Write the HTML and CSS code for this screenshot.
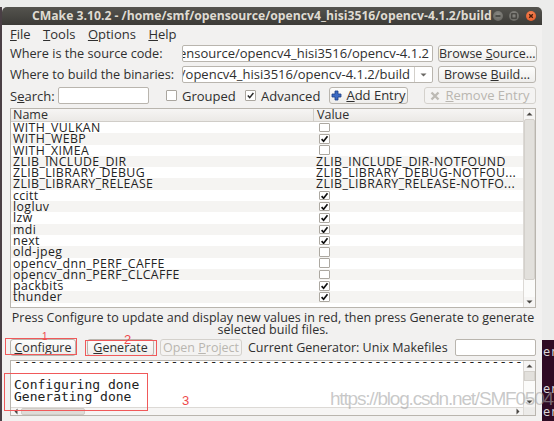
FILE: index.html
```html
<!DOCTYPE html>
<html>
<head>
<meta charset="utf-8">
<link rel="stylesheet" href="styles.css">
</head>
<body>
<div class="desk">
  <div class="edge"></div>
  <div class="win">
    <div class="titlebar">
      <span class="title">CMake 3.10.2 - /home/smf/opensource/opencv4_hisi3516/opencv-4.1.2/build</span>
      <div class="wctl">
        <span class="wb wb-grey"><svg width="10" height="10" viewBox="0 0 10 10"><rect x="2.5" y="4.3" width="5" height="1.4" fill="#3a3935"/></svg></span>
        <span class="wb wb-grey"><svg width="10" height="10" viewBox="0 0 10 10"><rect x="2.8" y="2.8" width="4.4" height="4.4" fill="none" stroke="#3a3935" stroke-width="1.1"/></svg></span>
        <span class="wb wb-close"><svg width="10" height="10" viewBox="0 0 10 10"><path d="M3.2 3.2L6.8 6.8M6.8 3.2L3.2 6.8" stroke="#4a1a08" stroke-width="1.4"/></svg></span>
      </div>
    </div>
    <div class="menubar">
      <span class="mi"><u>F</u>ile</span>
      <span class="mi"><u>T</u>ools</span>
      <span class="mi"><u>O</u>ptions</span>
      <span class="mi"><u>H</u>elp</span>
    </div>
    <div class="content">
      <div class="pathrow">
        <span class="lbl">Where is the source code:</span>
        <div class="field"><span class="ftext">/home/smf/opensource/opencv4_hisi3516/opencv-4.1.2</span></div>
        <span class="btn"><span>Browse <u>S</u>ource...</span></span>
      </div>
      <div class="pathrow gap4">
        <span class="lbl">Where to build the binaries:</span>
        <div class="field combo">
          <div class="ctext"><span class="ftext">/home/smf/opensource/opencv4_hisi3516/opencv-4.1.2/build</span></div>
          <span class="carrow"><svg width="7" height="4" viewBox="0 0 7 4"><path d="M0.5 0.5h6L3.5 3.5z" fill="#6a6864"/></svg></span>
        </div>
        <span class="btn"><span>Browse <u>B</u>uild...</span></span>
      </div>
      <div class="searchrow gap4">
        <span class="slbl">S<u>e</u>arch:</span>
        <div class="sinput"></div>
        <label class="chk grouped"><span class="box"></span><span>Grouped</span></label>
        <label class="chk adv"><span class="box"><svg width="9" height="9" viewBox="0 0 9 9"><path d="M1.8 4.6L3.7 6.6L7.4 2" fill="none" stroke="#2b2b2b" stroke-width="1.5"/></svg></span><span>Advanced</span></label>
        <span class="btn addbtn"><svg class="plus" width="11" height="11" viewBox="0 0 11 11"><path d="M4 1h3v3h3v3H7v3H4V7H1V4h3z" fill="#3d6bc4" stroke="#1d3f86" stroke-width="0.8"/></svg><span><u>A</u>dd Entry</span></span>
        <span class="btn dis rembtn"><svg class="xic" width="10" height="10" viewBox="0 0 10 10"><path d="M1.5 1.5L8.5 8.5M8.5 1.5L1.5 8.5" stroke="#bdbab4" stroke-width="2.4"/></svg><span><u>R</u>emove Entry</span></span>
      </div>
      <div class="table gap4">
        <div class="tmain">
          <div class="thead"><span class="cname">Name</span><span class="cval">Value</span></div>
          <div class="tbody">
            <div class="tr"><span class="cname">WITH_VULKAN</span><span class="cval"><span class="cb"></span></span></div>
            <div class="tr"><span class="cname">WITH_WEBP</span><span class="cval"><span class="cb on"></span></span></div>
            <div class="tr"><span class="cname">WITH_XIMEA</span><span class="cval"><span class="cb"></span></span></div>
            <div class="tr"><span class="cname">ZLIB_INCLUDE_DIR</span><span class="cval">ZLIB_INCLUDE_DIR-NOTFOUND</span></div>
            <div class="tr"><span class="cname">ZLIB_LIBRARY_DEBUG</span><span class="cval">ZLIB_LIBRARY_DEBUG-NOTFOU...</span></div>
            <div class="tr"><span class="cname">ZLIB_LIBRARY_RELEASE</span><span class="cval">ZLIB_LIBRARY_RELEASE-NOTFO...</span></div>
            <div class="tr"><span class="cname">ccitt</span><span class="cval"><span class="cb on"></span></span></div>
            <div class="tr"><span class="cname">logluv</span><span class="cval"><span class="cb on"></span></span></div>
            <div class="tr"><span class="cname">lzw</span><span class="cval"><span class="cb on"></span></span></div>
            <div class="tr"><span class="cname">mdi</span><span class="cval"><span class="cb on"></span></span></div>
            <div class="tr"><span class="cname">next</span><span class="cval"><span class="cb on"></span></span></div>
            <div class="tr"><span class="cname">old-jpeg</span><span class="cval"><span class="cb"></span></span></div>
            <div class="tr"><span class="cname">opencv_dnn_PERF_CAFFE</span><span class="cval"><span class="cb"></span></span></div>
            <div class="tr"><span class="cname">opencv_dnn_PERF_CLCAFFE</span><span class="cval"><span class="cb"></span></span></div>
            <div class="tr"><span class="cname">packbits</span><span class="cval"><span class="cb on"></span></span></div>
            <div class="tr"><span class="cname">thunder</span><span class="cval"><span class="cb on"></span></span></div>
          </div>
        </div>
        <div class="vscroll">
          <span class="arr"><svg width="7" height="4" viewBox="0 0 7 4"><path d="M0.5 3.5h6L3.5 0.5z" fill="#4a4844"/></svg></span>
          <span class="thumb"></span>
          <span class="track"></span>
          <span class="arr"><svg width="7" height="4" viewBox="0 0 7 4"><path d="M0.5 0.5h6L3.5 3.5z" fill="#4a4844"/></svg></span>
        </div>
      </div>
      <p class="desc"><span class="l1">Press Configure to update and display new values in red, then press Generate to generate</span><span class="l2">selected build files.</span></p>
      <div class="btnrow">
        <span class="btn b-conf"><span><u>C</u>onfigure</span></span>
        <span class="btn b-gen"><span><u>G</u>enerate</span></span>
        <span class="btn dis b-open"><span>Open <u>P</u>roject</span></span>
        <span class="curgen">Current Generator: Unix Makefiles</span>
        <div class="ginput"></div>
      </div>
      <div class="output">
        <div class="omain">
          <div class="otext">
            <div class="oline">-----------------------------------------------------------------------</div>
            <div class="oline">&nbsp;</div>
            <div class="oline">Configuring done</div>
            <div class="oline">Generating done</div>
          </div>
          <div class="hscroll">
            <span class="harr"><svg width="4" height="7" viewBox="0 0 4 7"><path d="M3.5 0.5v6L0.5 3.5z" fill="#4a4844"/></svg></span>
            <span class="hthumb"></span>
            <span class="htrack"></span>
            <span class="harr"><svg width="4" height="7" viewBox="0 0 4 7"><path d="M0.5 0.5v6L3.5 3.5z" fill="#4a4844"/></svg></span>
          </div>
        </div>
        <div class="ovscroll">
          <span class="arr"><svg width="7" height="4" viewBox="0 0 7 4"><path d="M0.5 3.5h6L3.5 0.5z" fill="#4a4844"/></svg></span>
          <span class="othumb"></span>
          <span class="otrack"></span>
          <span class="arr"><svg width="7" height="4" viewBox="0 0 7 4"><path d="M0.5 0.5h6L3.5 3.5z" fill="#4a4844"/></svg></span>
          <span class="corner"></span>
        </div>
      </div>
    </div>
  </div>
</div>

<div class="term">
  <span class="tl t1">er</span>
  <span class="tl t2">er</span>
  <span class="tl t3">er</span>
</div>

<div class="mark m1"></div>
<div class="mark m2"></div>
<div class="mark m3"></div>
<span class="num n1">1</span>
<span class="num n2">2</span>
<span class="num n3">3</span>
<span class="wm">https://blog.csdn.net/SMF0504</span>
</body>
</html>
```

FILE: styles.css
```css
* { box-sizing: border-box; }

body {
  margin: 0;
  width: 554px;
  height: 421px;
  overflow: hidden;
  position: relative;
  background: #ececeb;
  font-family: "Open Sans", "DejaVu Sans", sans-serif;
  color: #2f2f2f;
}

u { text-decoration: underline; text-underline-offset: 1px; }

.desk {
  display: flex;
  padding-top: 7px;
  height: 421px;
}

.edge {
  width: 2px;
  background: #4a3f45;
}

.win {
  width: 540px;
  height: 414px;
  background: #f2f1f0;
  border-radius: 5px 5px 0 0;
  display: flex;
  flex-direction: column;
  overflow: hidden;
}

.titlebar {
  flex: none;
  height: 18px;
  display: flex;
  align-items: center;
  padding: 0 6px 0 30px;
  background: linear-gradient(#54534e, #3c3b37);
}

.title {
  flex: 1;
  white-space: nowrap;
  overflow: hidden;
  color: #dfdbd2;
  font-weight: 700;
  font-size: 12.2px;
  line-height: 18px;
}

.wctl { display: flex; gap: 6px; }

.wb {
  width: 10px;
  height: 10px;
  border-radius: 50%;
  display: flex;
}
.wb-grey { background: radial-gradient(circle at 50% 35%, #8a8984, #5f5e59); }
.wb-close { background: radial-gradient(circle at 50% 35%, #f58a5c, #e2501c); margin-left: 1px; }

.menubar {
  flex: none;
  height: 17px;
  display: flex;
  align-items: center;
  padding-left: 8px;
  font-size: 13px;
}
.mi { margin-right: 12.5px; }

.content {
  flex: 1;
  display: flex;
  flex-direction: column;
  padding: 3px 6px 0 8px;
  font-size: 12.5px;
}

.gap4 { margin-top: 4px; }

.pathrow {
  height: 17px;
  display: grid;
  grid-template-columns: 167px 251px 1fr;
  column-gap: 5px;
  align-items: center;
}

.lbl { white-space: nowrap; line-height: 17px; font-size: 12.7px; }

.field {
  height: 17px;
  background: #fff;
  border: 1px solid #b9b5ae;
  border-radius: 2px;
  display: flex;
  justify-content: flex-end;
  overflow: hidden;
  padding-right: 3px;
  line-height: 15px;
  font-size: 13px;
}
.ftext { white-space: nowrap; flex: none; }

.combo { padding-right: 0; justify-content: stretch; }
.ctext {
  flex: 1;
  display: flex;
  justify-content: flex-end;
  overflow: hidden;
  padding-right: 4px;
}
.carrow {
  flex: none;
  width: 18px;
  border-left: 1px solid #d3d0cb;
  display: flex;
  align-items: center;
  justify-content: center;
}

.btn {
  height: 17px;
  display: flex;
  align-items: center;
  justify-content: center;
  white-space: nowrap;
  background: linear-gradient(#fdfdfc, #eeedeb);
  border: 1px solid #b9b5ae;
  border-radius: 3px;
  line-height: 15px;
}
.btn.dis {
  color: #b9b6b0;
  border-color: #d4d1cc;
  background: #f4f3f2;
}

.searchrow {
  height: 17px;
  display: flex;
  align-items: center;
  font-size: 13px;
}
.slbl { width: 48px; white-space: nowrap; }
.sinput {
  width: 91px;
  height: 17px;
  background: #fff;
  border: 1px solid #b9b5ae;
  border-radius: 2px;
}
.chk {
  display: flex;
  align-items: center;
  white-space: nowrap;
}
.grouped { width: 79px; margin-left: 17px; }
.adv { width: 84px; }
.box {
  width: 11px;
  height: 11px;
  margin-right: 5px;
  background: #fff;
  border: 1px solid #aaa69f;
  border-radius: 1px;
  display: flex;
  align-items: center;
  justify-content: center;
}
.addbtn { width: 79px; gap: 4px; }
.rembtn { width: 112px; margin-left: 16px; gap: 5px; }

.table {
  height: 200px;
  flex: none;
  display: flex;
  border: 1px solid #b9b5ae;
  background: #fff;
}
.tmain { flex: 1; display: flex; flex-direction: column; }
.thead {
  height: 13px;
  display: flex;
  background: linear-gradient(#f6f5f4, #ebe9e6);
  border-bottom: 1px solid #d0cdc8;
  font-size: 12.5px;
  line-height: 12px;
  font-weight: 500;
}
.thead .cval { border-left: 1px solid #d0cdc8; }
.tbody { flex: 1; }
.cname {
  width: 302px;
  padding-left: 2px;
  white-space: nowrap;
}
.cval {
  flex: 1;
  padding-left: 3px;
  white-space: nowrap;
  display: flex;
  align-items: center;
}
.tr {
  height: 11.3px;
  display: flex;
  font-size: 12.3px;
  line-height: 11.3px;
  font-weight: 500;
  letter-spacing: 0.4px;
  color: #222;
}
.tr:nth-child(even) { background: #f5f4f2; }

.cb {
  width: 11px;
  height: 9.5px;
  margin-left: 3px;
  background: #fff;
  border: 1px solid #aca8a1;
  border-radius: 1px;
}
.cb.on {
  background: #fff url("data:image/svg+xml,%3Csvg xmlns='http://www.w3.org/2000/svg' width='9' height='8' viewBox='0 0 9 8'%3E%3Cpath d='M1.6 4.2L3.6 6.3L7.5 1.4' fill='none' stroke='%23111' stroke-width='1.7'/%3E%3C/svg%3E") center/9px 8px no-repeat;
}

.vscroll {
  width: 12px;
  display: flex;
  flex-direction: column;
  border-left: 1px solid #dcd9d5;
  background: #f6f5f4;
}
.arr {
  height: 10px;
  flex: none;
  display: flex;
  align-items: center;
  justify-content: center;
}
.thumb { height: 161px; flex: none; background: #e2e0dc; border: 1px solid #d3d0cb; border-radius: 2px; }
.track { flex: 1; background: #fbfbfa; }

.desc {
  margin: 4px 0 0;
  height: 23px;
  display: flex;
  flex-direction: column;
  align-items: center;
  font-size: 12.5px;
  line-height: 11.5px;
}
.l1, .l2 { white-space: nowrap; }

.btnrow {
  margin-top: 4px;
  height: 17px;
  display: flex;
  align-items: center;
}
.b-conf { width: 66px; }
.b-gen { width: 67px; margin-left: 11px; }
.b-open { width: 82px; margin-left: 6px; }
.curgen { margin-left: 6px; white-space: nowrap; width: 202px; }
.ginput {
  margin-left: auto;
  width: 81px;
  height: 17px;
  background: #fff;
  border: 1px solid #b9b5ae;
  border-radius: 2px;
}

.output {
  margin-top: 4px;
  height: 56px;
  flex: none;
  display: flex;
  border: 1px solid #b9b5ae;
  background: #fff;
}
.omain { flex: 1; display: flex; flex-direction: column; overflow: hidden; }
.otext {
  flex: 1;
  overflow: hidden;
  padding-left: 3px;
  font-family: "DejaVu Sans Mono", monospace;
  font-size: 13px;
  color: #222;
}
.oline {
  height: 11.5px;
  line-height: 11.5px;
  white-space: nowrap;
}
.oline:first-child { margin-top: -5px; }

.hscroll {
  height: 8px;
  flex: none;
  display: flex;
  background: #f6f5f4;
  border-top: 1px solid #dcd9d5;
}
.harr { width: 10px; flex: none; display: flex; align-items: center; justify-content: center; }
.hthumb { width: 64px; background: #dedcd8; border: 1px solid #cfccc7; border-radius: 2px; }
.htrack { flex: 1; }

.ovscroll {
  width: 12px;
  display: flex;
  flex-direction: column;
  border-left: 1px solid #dcd9d5;
  background: #f6f5f4;
}
.othumb { height: 10px; flex: none; background: #e2e0dc; border: 1px solid #d3d0cb; }
.otrack { flex: 1; background: #fbfbfa; }
.corner { height: 8px; flex: none; background: #ecebe9; }

.term {
  position: absolute;
  left: 542px;
  top: 340px;
  width: 12px;
  height: 81px;
  background: #2f0b24;
  overflow: hidden;
  font-family: "DejaVu Sans Mono", monospace;
  font-size: 12px;
  color: #d8d4d6;
}
.tl { position: absolute; left: 1px; line-height: 12px; }
.t1 { top: 6px; }
.t2 { top: 43px; }
.t3 { top: 66px; }

.mark {
  position: absolute;
  border: 1px solid #f0595a;
}
.m1 { left: 5px; top: 338px; width: 72px; height: 17px; }
.m2 { left: 85px; top: 340px; width: 72px; height: 16px; }
.m3 { left: 4px; top: 373px; width: 144px; height: 38px; }

.num {
  position: absolute;
  color: #ee4a4c;
  font-family: "Liberation Sans", sans-serif;
  font-size: 12px;
  line-height: 12px;
}
.n1 { left: 42px; top: 331px; font-size: 10px; }
.n2 { left: 124px; top: 334px; font-size: 13px; }
.n3 { left: 182px; top: 395px; font-size: 13px; }

.wm {
  position: absolute;
  left: 330px;
  top: 388px;
  font-family: "Liberation Sans", sans-serif;
  font-size: 19px;
  letter-spacing: -1.2px;
  line-height: 22px;
  color: rgba(165, 165, 165, 0.6);
  white-space: nowrap;
}
```
